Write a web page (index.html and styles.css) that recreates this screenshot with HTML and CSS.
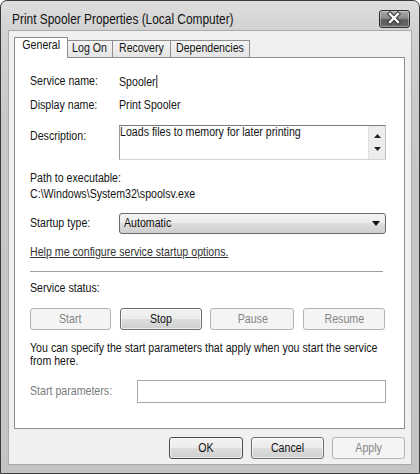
FILE: index.html
```html
<!DOCTYPE html>
<html>
<head>
<meta charset="utf-8">
<link rel="stylesheet" href="styles.css">
</head>
<body>
<div class="window">
  <div class="titlebar">
    <span class="title t">Print Spooler Properties (Local Computer)</span>
    <div class="close">
      <svg width="30" height="17" viewBox="0 0 30 17">
        <path d="M11 4 L19 12 M19 4 L11 12" stroke="#2a2a2a" stroke-width="4.2" stroke-linecap="square" fill="none"/>
        <path d="M11 4 L19 12 M19 4 L11 12" stroke="#ffffff" stroke-width="2.4" stroke-linecap="square" fill="none"/>
      </svg>
    </div>
  </div>
  <div class="client">
    <div class="tabs">
      <div class="tab active tab-general"><span class="t tc">General</span></div>
      <div class="tab tab-logon"><span class="t tc">Log On</span></div>
      <div class="tab tab-recovery"><span class="t tc">Recovery</span></div>
      <div class="tab tab-deps"><span class="t tc">Dependencies</span></div>
    </div>
    <div class="panel">
      <div class="row r-name"><span class="label"><span class="t">Service name:</span></span><span class="t">Spooler<span class="caret"></span></span></div>
      <div class="row r-display"><span class="label"><span class="t">Display name:</span></span><span class="t">Print Spooler</span></div>
      <div class="row r-desc">
        <span class="label label-desc"><span class="t">Description:</span></span>
        <div class="textbox">
          <span class="textbox-text t">Loads files to memory for later printing</span>
          <div class="scroll">
            <svg width="7" height="4" viewBox="0 0 7 4"><path d="M0 4 L3.5 0 L7 4 Z" fill="#222"/></svg>
            <svg width="7" height="4" viewBox="0 0 7 4"><path d="M0 0 L7 0 L3.5 4 Z" fill="#222"/></svg>
          </div>
        </div>
      </div>
      <div class="row r-path"><span class="t">Path to executable:</span></div>
      <div class="row r-exe"><span class="t">C:\Windows\System32\spoolsv.exe</span></div>
      <div class="row r-startup">
        <span class="label"><span class="t">Startup type:</span></span>
        <div class="select">
          <span class="t">Automatic</span>
          <svg width="8" height="5" viewBox="0 0 8 5"><path d="M0 0 L8 0 L4 5 Z" fill="#111"/></svg>
        </div>
      </div>
      <div class="row r-link"><span class="link t">Help me configure service startup options.</span></div>
      <div class="separator"></div>
      <div class="row r-status"><span class="t">Service status:</span></div>
      <div class="svc-buttons">
        <div class="btn disabled"><span class="t tc">Start</span></div>
        <div class="btn"><span class="t tc">Stop</span></div>
        <div class="btn disabled"><span class="t tc">Pause</span></div>
        <div class="btn disabled"><span class="t tc">Resume</span></div>
      </div>
      <p class="note">
        <span class="note-line">You can specify the start parameters that apply when you start the service</span>
        <span class="note-line">from here.</span>
      </p>
      <div class="row r-params">
        <span class="label label-params"><span class="t">Start parameters:</span></span>
        <div class="input"></div>
      </div>
    </div>
    <div class="footer">
      <div class="btn fbtn default"><span class="t tc">OK</span></div>
      <div class="btn fbtn"><span class="t tc">Cancel</span></div>
      <div class="btn fbtn disabled"><span class="t tc">Apply</span></div>
    </div>
  </div>
</div>
</body>
</html>
```

FILE: styles.css
```css
* { box-sizing: border-box; }

html, body {
  margin: 0;
  padding: 0;
  background: #ffffff;
}

body {
  width: 420px;
  height: 474px;
  overflow: hidden;
  font-family: "Liberation Sans", Arial, sans-serif;
  font-size: 12.5px;
  line-height: 13px;
  color: #141414;
}

/* Segoe-like narrow text: Liberation Sans condensed horizontally */
.t {
  display: inline-block;
  white-space: nowrap;
  transform: scaleX(0.85);
  transform-origin: 0 50%;
}
.t.tc { transform-origin: 50% 50%; }

.window {
  width: 420px;
  height: 474px;
  border: 1px solid #3a3a3a;
  border-radius: 7px 7px 0 0;
  background: linear-gradient(#dedede 0, #d2d2d2 30px, #c8c8c8 120px, #c4c4c4 100%);
  padding: 0 7px 8px 7px;
  display: flex;
  flex-direction: column;
}

.titlebar {
  height: 29px;
  display: flex;
  justify-content: space-between;
  align-items: flex-start;
  flex: none;
}

.title {
  font-size: 14px;
  line-height: 16px;
  margin: 10px 0 0 4px;
  color: #141414;
}

.close {
  width: 31px;
  height: 18px;
  margin: 9px 2px 0 0;
  border: 1px solid #2e2e2e;
  border-radius: 3px;
  background: linear-gradient(#a8a8a8 0, #8a8a8a 45%, #5c5c5c 55%, #6a6a6a 100%);
  box-shadow: inset 0 0 0 1px rgba(255,255,255,0.35);
  display: flex;
  align-items: center;
  justify-content: center;
}

.close svg { display: block; margin-left: -1px; margin-top: -1px; }

.client {
  flex: 1;
  background: #f0f0f0;
  border: 1px solid #a9a9a9;
  padding: 6px 6px 0 5px;
  display: flex;
  flex-direction: column;
}

.tabs {
  display: flex;
  align-items: flex-start;
  height: 21px;
  margin-bottom: -1px;
  position: relative;
  z-index: 1;
}

.tab {
  height: 17px;
  margin-top: 3px;
  margin-left: -1px;
  padding-top: 1px;
  border: 1px solid #8e8e8e;
  border-bottom: none;
  background: linear-gradient(#f4f4f4, #e4e4e4);
  display: flex;
  justify-content: center;
  align-items: flex-start;
}

.tab.active {
  height: 21px;
  margin-top: 0;
  margin-left: 0;
  background: #ffffff;
  position: relative;
  z-index: 2;
}

.tab-general { width: 54px; }
.tab-logon { width: 46px; }
.tab-recovery { width: 59px; }
.tab-deps { width: 80px; }

.panel {
  height: 372px;
  background: #ffffff;
  border: 1px solid #8e8e8e;
  padding: 17px 18px 0 15px;
  flex: none;
}

.row {
  display: flex;
  align-items: flex-start;
  min-height: 13px;
}

.label {
  width: 89px;
  flex: none;
}

.caret {
  display: inline-block;
  width: 1.3px;
  height: 13px;
  background: #000;
  vertical-align: -2px;
  margin-left: 1px;
}

.r-display { margin-top: 10px; }

.r-desc { margin-top: 13px; }
.label-desc { padding-top: 5px; }

.textbox {
  flex: 1;
  height: 35px;
  border: 1px solid;
  border-color: #7c7c7c #c2c2c2 #d4d4d4 #9a9a9a;
  display: flex;
  justify-content: space-between;
  align-items: flex-start;
  background: #fff;
}

.scroll {
  width: 17px;
  height: 100%;
  background: #ededed;
  border-left: 1px solid #e0e0e0;
  display: flex;
  flex-direction: column;
  align-items: center;
  justify-content: space-between;
  padding: 8px 0 8px 0;
}
.scroll svg { display: block; }

.r-path { margin-top: 12px; }
.r-exe { margin-top: 3px; }

.r-startup { margin-top: 12px; align-items: center; }

.select {
  flex: 1;
  height: 21px;
  border: 1px solid #6a6a6a;
  border-radius: 3px;
  background: linear-gradient(#f3f3f3 0, #ebebeb 50%, #dddddd 50%, #cfcfcf 100%);
  display: flex;
  align-items: center;
  justify-content: space-between;
  padding: 0 5px 0 4px;
  color: #111;
}
.select svg { display: block; }

.r-link { margin-top: 12px; }

.link {
  color: #333;
  text-decoration: underline;
  text-underline-offset: 1px;
}

.separator {
  height: 1px;
  background: #a0a0a0;
  margin: 12px 3px 0 0;
}

.r-status { margin-top: 10px; }

.svc-buttons {
  margin-top: 13px;
  display: grid;
  grid-template-columns: 81px 82px 84px 82px;
  justify-content: space-between;
  margin-right: 1px;
}

.btn {
  height: 22px;
  border: 1px solid #6e6e6e;
  border-radius: 3px;
  background: linear-gradient(#f3f3f3 0, #ebebeb 50%, #dddddd 50%, #cfcfcf 100%);
  box-shadow: inset 0 0 0 1px rgba(255,255,255,0.6);
  display: flex;
  align-items: center;
  justify-content: center;
  color: #111;
}

.btn.disabled {
  border-color: #b3b3b3;
  background: #f4f4f4;
  box-shadow: none;
  color: #848484;
}

.note {
  margin: 12px 0 0 0;
  line-height: 13px;
}

.note-line {
  display: block;
  white-space: nowrap;
  transform: scaleX(0.85);
  transform-origin: 0 50%;
}

.r-params { margin-top: 12px; align-items: center; }

.label-params {
  width: 107px;
  color: #7a7a7a;
}

.input {
  flex: 1;
  height: 23px;
  border: 1px solid #a8a8a8;
  background: #fff;
}

.footer {
  margin-top: 8px;
  display: flex;
  justify-content: flex-end;
  gap: 8px;
}

.fbtn { width: 73px; }
.fbtn.default { width: 74px; border-color: #4a4a4a; }
```
